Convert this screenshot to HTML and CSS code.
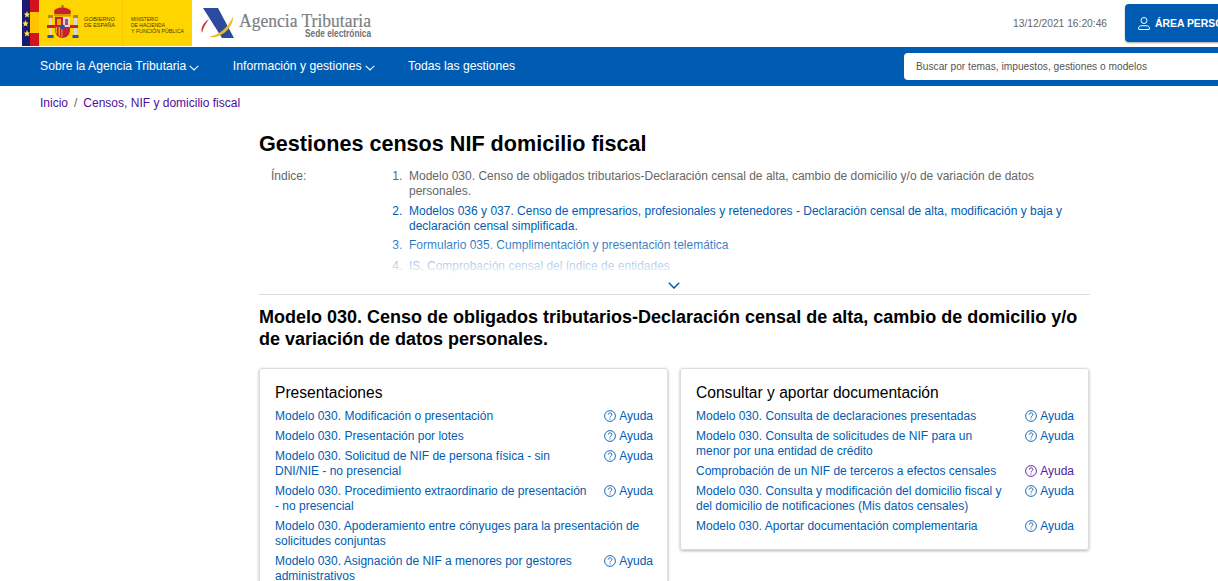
FILE: index.html
```html
<!DOCTYPE html>
<html lang="es">
<head>
<meta charset="utf-8">
<title>Gestiones censos NIF domicilio fiscal</title>
<link rel="stylesheet" href="styles.css">
</head>
<body>
<header class="topbar">
  <div class="logo-gov">
    <svg class="gov-svg" width="170" height="46" viewBox="0 0 170 46">
      <rect width="170" height="46" fill="#ffd500"/>
      <rect width="8" height="46" fill="#1a1a6e"/>
      <rect x="8" width="9" height="46" fill="#d3121d"/>
      <rect x="8" y="12" width="9" height="21" fill="#ffc400"/>
      <rect x="100" width="1" height="46" fill="#f7c600"/>
      <g fill="#ffe14d">
        <polygon points="5,11 6,13.4 8,13.6 6.5,15.2 7,17.5 5,16.3 3,17.5 3.5,15.2 2,13.6 4,13.4"/>
        <polygon points="3.5,20 4.5,22.4 6.5,22.6 5,24.2 5.5,26.5 3.5,25.3 1.5,26.5 2,24.2 .5,22.6 2.5,22.4"/>
        <polygon points="5,30 6,32.4 8,32.6 6.5,34.2 7,36.5 5,35.3 3,36.5 3.5,34.2 2,32.6 4,32.4"/>
      </g>
      <g>
        <rect x="27" y="17" width="3" height="19" fill="#dcd6c8"/>
        <rect x="52" y="17" width="3" height="19" fill="#dcd6c8"/>
        <rect x="26" y="15" width="5" height="3" fill="#b8860b"/>
        <rect x="51" y="15" width="5" height="3" fill="#b8860b"/>
        <rect x="25.5" y="35" width="6" height="3" fill="#2b50a8"/>
        <rect x="50.5" y="35" width="6" height="3" fill="#2b50a8"/>
        <path d="M25 25h8v3h-8zM48 25h8v3h-8z" fill="#c8202c"/>
        <path d="M32 12c0-6 16-6 17 0l-1 3H33z" fill="#c8202c"/>
        <path d="M32 14h17v2.5H32z" fill="#d49a00"/>
        <path d="M39.5 5h2v3h-2z" fill="#8a6d3b"/>
        <path d="M33 17h15v13c0 5-4 8-7.500 8S33 35 33 30z" fill="#c8202c"/>
        <path d="M41 17h7v10h-7z" fill="#ecd3d9"/>
        <path d="M35 19h4v6h-4z" fill="#e2a908"/>
        <path d="M43 19h3v6h-3z" fill="#a84a8a"/>
        <path d="M33.500 27h7v10c-4-1-7-3-7-7z" fill="#e0a020"/>
        <path d="M35 27h1.500v9H35zM38 27h1.500v9H38z" fill="#c8202c"/>
        <circle cx="40.500" cy="27" r="2.400" fill="#2b50a8"/>
      </g>
      <g class="gov-text">
        <text x="62" y="21" textLength="31" lengthAdjust="spacingAndGlyphs">GOBIERNO</text>
        <text x="62" y="27" textLength="31" lengthAdjust="spacingAndGlyphs">DE ESPAÑA</text>
        <text x="109" y="21" textLength="27" lengthAdjust="spacingAndGlyphs">MINISTERIO</text>
        <text x="109" y="27" textLength="34" lengthAdjust="spacingAndGlyphs">DE HACIENDA</text>
        <text x="109" y="33" textLength="53" lengthAdjust="spacingAndGlyphs">Y FUNCIÓN PÚBLICA</text>
      </g>
    </svg>
  </div>
  <div class="logo-at">
    <svg width="186" height="46" viewBox="0 0 186 46">
      <path d="M12 8h15l16 30H31z" fill="#2c4a9e"/>
      <path d="M18 36.500c10-1 19-9 24-20 1 11-14 24-24 20z" fill="#edbb2a"/>
      <path d="M11 33c-2-5 2-11 7-14-3 4-6 9-7 14z" fill="#c8362c"/>
      <text class="at-name" x="48" y="27" textLength="132" lengthAdjust="spacingAndGlyphs">Agencia Tributaria</text>
      <text class="at-sede" x="114" y="37" textLength="66" lengthAdjust="spacingAndGlyphs">Sede electrónica</text>
    </svg>
  </div>
  <div class="top-right">
    <span class="clock">13/12/2021 16:20:46</span>
    <a class="personal" href="#">
      <svg width="12" height="13" viewBox="0 0 12 13" fill="none" stroke="#fff" stroke-width="1">
        <circle cx="6" cy="3.500" r="3"/>
        <path d="M.7 12.500v-1.500c0-1.300 1-2.200 2.300-2.200h6c1.300 0 2.300.9 2.300 2.200v1.500z"/>
      </svg>
      <span>ÁREA PERSONAL</span>
    </a>
  </div>
</header>
<nav class="mainnav">
  <a href="#">Sobre la Agencia Tributaria<svg class="caret" width="10" height="6" viewBox="0 0 10 6"><path d="M.7.8 5 5l4.300-4.200" fill="none" stroke="#fff" stroke-width="1.100"/></svg></a>
  <a href="#">Información y gestiones<svg class="caret" width="10" height="6" viewBox="0 0 10 6"><path d="M.7.8 5 5l4.300-4.200" fill="none" stroke="#fff" stroke-width="1.100"/></svg></a>
  <a href="#">Todas las gestiones</a>
  <div class="search">Buscar por temas, impuestos, gestiones o modelos</div>
</nav>
<div class="crumbs"><a href="#">Inicio</a><span class="sep">/</span><a href="#">Censos, NIF y domicilio fiscal</a></div>
<main class="content">
  <h1>Gestiones censos NIF domicilio fiscal</h1>
  <section class="index">
    <div class="index-label">Índice:</div>
    <ol class="index-list">
      <li class="seen">Modelo 030. Censo de obligados tributarios-Declaración censal de alta, cambio de domicilio y/o de variación de datos personales.</li>
      <li>Modelos 036 y 037. Censo de empresarios, profesionales y retenedores - Declaración censal de alta, modificación y baja y declaración censal simplificada.</li>
      <li>Formulario 035. Cumplimentación y presentación telemática</li>
      <li>IS. Comprobación censal del índice de entidades</li>
    </ol>
    <div class="fade"></div>
  </section>
  <div class="more"><svg width="12" height="7" viewBox="0 0 12 7"><path d="M.8.8 6 6l5.200-5.200" fill="none" stroke="#005cb2" stroke-width="1.500"/></svg></div>
  <h2>Modelo 030. Censo de obligados tributarios-Declaración censal de alta, cambio de domicilio y/o de variación de datos personales.</h2>
  <div class="cards">
    <article class="card">
      <h3>Presentaciones</h3>
      <div class="row"><a class="link" href="#">Modelo 030. Modificación o presentación</a><a class="help" href="#"><svg class="q" viewBox="0 0 12 12"><circle cx="6" cy="6" r="5.400"/><path d="M4.200 4.700c0-2.400 3.700-2.400 3.700-.2 0 1.400-1.900 1.400-1.900 3"/><path d="M6 8.500v1"/></svg>Ayuda</a></div>
      <div class="row"><a class="link" href="#">Modelo 030. Presentación por lotes</a><a class="help" href="#"><svg class="q" viewBox="0 0 12 12"><circle cx="6" cy="6" r="5.400"/><path d="M4.200 4.700c0-2.400 3.700-2.400 3.700-.2 0 1.400-1.900 1.400-1.900 3"/><path d="M6 8.500v1"/></svg>Ayuda</a></div>
      <div class="row"><a class="link" href="#">Modelo 030. Solicitud de NIF de persona física - sin DNI/NIE - no presencial</a><a class="help" href="#"><svg class="q" viewBox="0 0 12 12"><circle cx="6" cy="6" r="5.400"/><path d="M4.200 4.700c0-2.400 3.700-2.400 3.700-.2 0 1.400-1.900 1.400-1.900 3"/><path d="M6 8.500v1"/></svg>Ayuda</a></div>
      <div class="row"><a class="link" href="#">Modelo 030. Procedimiento extraordinario de presentación - no presencial</a><a class="help" href="#"><svg class="q" viewBox="0 0 12 12"><circle cx="6" cy="6" r="5.400"/><path d="M4.200 4.700c0-2.400 3.700-2.400 3.700-.2 0 1.400-1.900 1.400-1.900 3"/><path d="M6 8.500v1"/></svg>Ayuda</a></div>
      <div class="row"><a class="link wide" href="#">Modelo 030. Apoderamiento entre cónyuges para la presentación de solicitudes conjuntas</a></div>
      <div class="row"><a class="link" href="#">Modelo 030. Asignación de NIF a menores por gestores administrativos</a><a class="help" href="#"><svg class="q" viewBox="0 0 12 12"><circle cx="6" cy="6" r="5.400"/><path d="M4.200 4.700c0-2.400 3.700-2.400 3.700-.2 0 1.400-1.900 1.400-1.900 3"/><path d="M6 8.500v1"/></svg>Ayuda</a></div>
    </article>
    <article class="card">
      <h3>Consultar y aportar documentación</h3>
      <div class="row"><a class="link" href="#">Modelo 030. Consulta de declaraciones presentadas</a><a class="help" href="#"><svg class="q" viewBox="0 0 12 12"><circle cx="6" cy="6" r="5.400"/><path d="M4.200 4.700c0-2.400 3.700-2.400 3.700-.2 0 1.400-1.900 1.400-1.900 3"/><path d="M6 8.500v1"/></svg>Ayuda</a></div>
      <div class="row"><a class="link" href="#">Modelo 030. Consulta de solicitudes de NIF para un menor por una entidad de crédito</a><a class="help" href="#"><svg class="q" viewBox="0 0 12 12"><circle cx="6" cy="6" r="5.400"/><path d="M4.200 4.700c0-2.400 3.700-2.400 3.700-.2 0 1.400-1.900 1.400-1.900 3"/><path d="M6 8.500v1"/></svg>Ayuda</a></div>
      <div class="row"><a class="link" href="#">Comprobación de un NIF de terceros a efectos censales</a><a class="help visited" href="#"><svg class="q" viewBox="0 0 12 12"><circle cx="6" cy="6" r="5.400"/><path d="M4.200 4.700c0-2.400 3.700-2.400 3.700-.2 0 1.400-1.900 1.400-1.900 3"/><path d="M6 8.500v1"/></svg>Ayuda</a></div>
      <div class="row"><a class="link" href="#">Modelo 030. Consulta y modificación del domicilio fiscal y del domicilio de notificaciones (Mis datos censales)</a><a class="help" href="#"><svg class="q" viewBox="0 0 12 12"><circle cx="6" cy="6" r="5.400"/><path d="M4.200 4.700c0-2.400 3.700-2.400 3.700-.2 0 1.400-1.900 1.400-1.900 3"/><path d="M6 8.500v1"/></svg>Ayuda</a></div>
      <div class="row"><a class="link" href="#">Modelo 030. Aportar documentación complementaria</a><a class="help" href="#"><svg class="q" viewBox="0 0 12 12"><circle cx="6" cy="6" r="5.400"/><path d="M4.200 4.700c0-2.400 3.700-2.400 3.700-.2 0 1.400-1.900 1.400-1.900 3"/><path d="M6 8.500v1"/></svg>Ayuda</a></div>
    </article>
  </div>
</main>
</body>
</html>
```
FILE: styles.css
```css
* { box-sizing: border-box; }
html, body { margin: 0; height: 581px; overflow: hidden; background: #fff; }
body { font-family: "Liberation Sans", Arial, sans-serif; font-size: 12px; line-height: 15px; color: #000; }
a { text-decoration: none; color: #005cb2; }

.topbar { display: flex; align-items: flex-start; height: 47px; padding-left: 22px; overflow: hidden; }
.logo-gov, .logo-at { height: 46px; }
.gov-svg, .logo-at svg { display: block; }
.gov-text text { font-family: "Liberation Sans", sans-serif; font-size: 6px; fill: #4a3b00; }
.at-name { font-family: "Liberation Serif", serif; font-size: 18px; fill: #7b7f85; stroke: #7b7f85; stroke-width: .2px; }
.at-sede { font-family: "Liberation Sans", sans-serif; font-size: 10px; font-weight: bold; fill: #6f7276; }
.logo-at { margin-left: -1px; }
.top-right { margin-left: auto; display: flex; align-items: flex-start; flex: none; width: 242px; margin-right: -37px; }
.clock { width: 94px; flex: none; margin-top: 16px; font-size: 10.250px; color: #666; white-space: nowrap; }
.personal { display: flex; align-items: center; gap: 5px; margin: 4px 0 0 18px; height: 38px; width: 130px; flex: none; padding-left: 13px; background: #005cb2; color: #fff; border-radius: 4px 0 0 4px; box-shadow: 0 1px 2px rgba(0,0,0,.35); font-size: 10.400px; font-weight: bold; white-space: nowrap; }

.mainnav { display: flex; align-items: center; height: 39px; padding-left: 40px; background: #005cb2; overflow: hidden; }
.mainnav a { color: #fff; margin-right: 33.500px; font-size: 12.200px; white-space: nowrap; }
.caret { margin-left: 3px; vertical-align: -1px; }
.search { margin-left: auto; width: 314px; height: 27px; flex: none; padding: 0 12px; background: #fff; border-radius: 4px 0 0 4px; color: #555; font-size: 10.200px; line-height: 28px; white-space: nowrap; }

.crumbs { padding: 10px 0 0 40px; color: #666; }
.crumbs a { color: #4b0f9c; }
.sep { margin: 0 6px; }

.content { width: 831px; margin-left: 259px; }
h1 { margin: 20px 0 0; font-size: 21.600px; line-height: 26px; font-weight: bold; }
.index { position: relative; display: flex; height: 114px; margin-top: 7px; padding: 4px 0 0 12px; overflow: hidden; line-height: 14.500px; }
.index-label { width: 95px; color: #666; flex: none; padding-top: 1px; }
.index-list { margin: 0; padding: 1px 25px 0 43px; flex: 1; }
.index-list li { margin-bottom: 6px; color: #005cb2; }
.index-list li:nth-child(2) { margin-bottom: 5px; }
.index-list li::marker { content: counter(list-item) ".  "; }
.index-list li.seen { color: #666; }
.fade { position: absolute; left: 0; right: 0; top: 72px; bottom: 0; background: linear-gradient(rgba(255,255,255,0), #fff 95%); }
.more { display: flex; justify-content: center; height: 17px; padding: 4px 0 0; border-bottom: 1px solid #ddd; }
.more svg { display: block; margin-left: -1px; }
h2 { margin: 11px 0 0; font-size: 18px; line-height: 22px; font-weight: bold; }
.cards { display: grid; grid-template-columns: 409px 409px; column-gap: 12px; align-items: start; margin-top: 18px; }
.card { padding: 15px 14px 15px 15px; border: 1px solid #ddd; border-radius: 3px; box-shadow: 0 1px 3px rgba(0,0,0,.3); }
h3 { margin: 0 0 8px; font-size: 15.600px; line-height: 17px; font-weight: normal; }
.row { display: flex; justify-content: space-between; margin-bottom: 5px; }
.row:last-child { margin-bottom: 0; }
.link { width: 313px; }
.link.wide { width: 100%; }
.help { display: flex; align-items: flex-start; flex: none; white-space: nowrap; }
.help.visited { color: #551a9c; }
.q { width: 12px; height: 12px; margin: 1px 3px 0 0; fill: none; stroke: currentColor; stroke-width: .9; }
```
